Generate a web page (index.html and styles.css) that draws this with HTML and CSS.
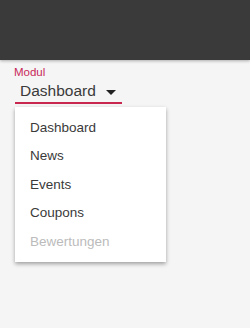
FILE: index.html
```html
<!DOCTYPE html>
<html lang="de">
<head>
  <meta charset="UTF-8">
  <meta name="viewport" content="width=device-width, initial-scale=1.0">
  <title>Modul</title>
  <link rel="stylesheet" href="styles.css">
</head>
<body>
  <header class="topbar"></header>
  <main class="content">
    <div class="field">
      <label class="field-label">Modul</label>
      <div class="select">
        <span class="select-value">Dashboard</span>
        <span class="select-arrow"></span>
      </div>
      <ul class="menu">
        <li class="menu-item">Dashboard</li>
        <li class="menu-item">News</li>
        <li class="menu-item">Events</li>
        <li class="menu-item">Coupons</li>
        <li class="menu-item disabled">Bewertungen</li>
      </ul>
    </div>
  </main>
</body>
</html>
```

FILE: styles.css
```css
* {
  box-sizing: border-box;
}

body {
  margin: 0;
  height: 328px;
  background-color: #f5f5f5;
  font-family: 'Liberation Sans', Arial, sans-serif;
  color: #333;
}

.topbar {
  height: 60px;
  background-color: #3a3a3a;
  box-shadow: 0 1px 3px rgba(0, 0, 0, 0.3);
}

.content {
  padding: 6px 0 0 15px;
}

.field {
  position: relative;
  width: 151px;
}

.field-label {
  display: block;
  font-size: 11.5px;
  line-height: 13px;
  color: #c8285a;
  margin-left: -1px;
}

.select {
  display: flex;
  align-items: center;
  width: 107px;
  height: 25px;
  padding-left: 5px;
  border-bottom: 2px solid #c8284f;
}

.select-value {
  font-size: 15.5px;
  color: #3a3a3a;
}

.select-arrow {
  margin-left: 10px;
  margin-top: 3px;
  width: 0;
  height: 0;
  border-left: 5px solid transparent;
  border-right: 5px solid transparent;
  border-top: 5px solid #222;
}

.menu {
  position: absolute;
  top: 41px;
  left: 0;
  width: 151px;
  margin: 0;
  padding: 7px 0 6px;
  list-style: none;
  background: #fff;
  box-shadow: 0 2px 4px rgba(0, 0, 0, 0.35);
}

.menu-item {
  height: 28.4px;
  line-height: 28.4px;
  padding-left: 15px;
  font-size: 13.5px;
  color: #3a3a3a;
}

.menu-item.disabled {
  color: #bbb;
}
```
